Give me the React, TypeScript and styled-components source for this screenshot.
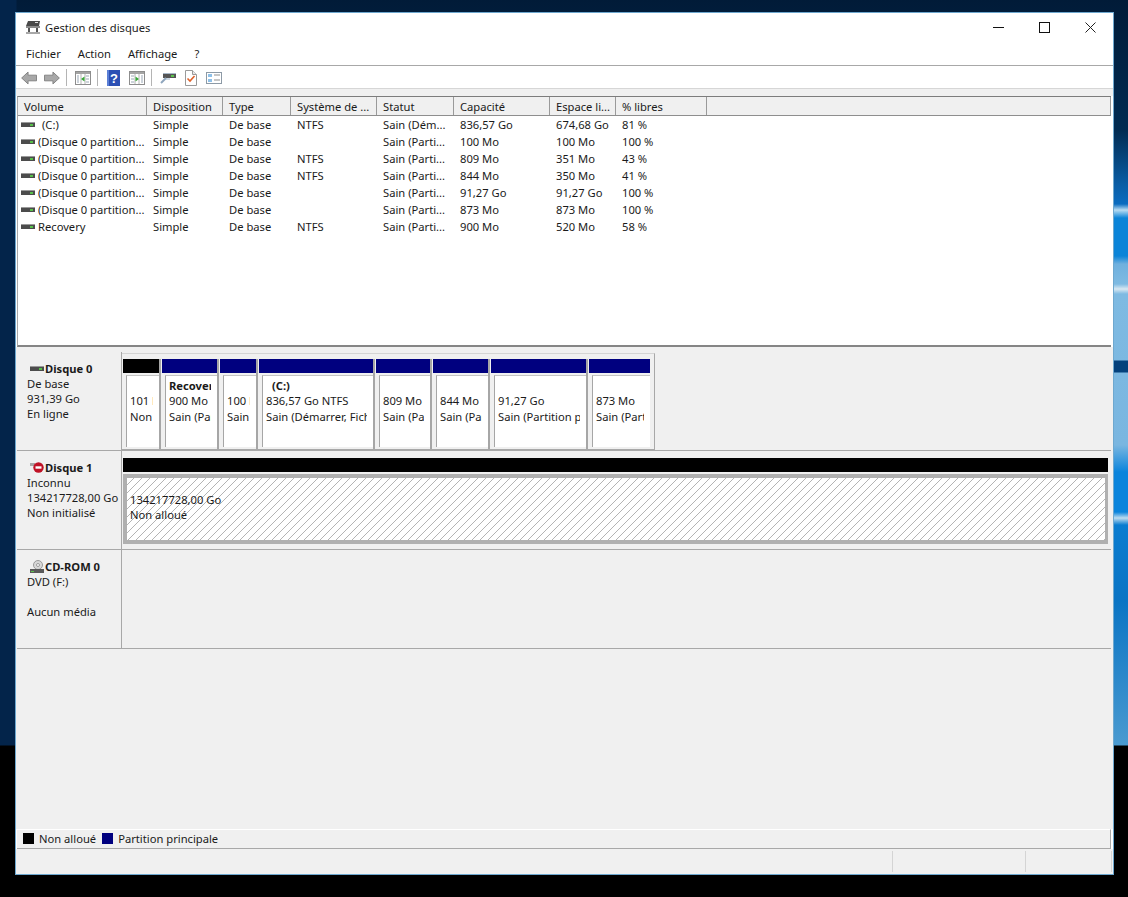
import React from 'react';
import styled, { createGlobalStyle } from 'styled-components';

const GlobalStyle = createGlobalStyle`
  html, body {
    margin: 0;
    padding: 0;
    background: #000;
  }
`;

const Desktop = styled.div`
  width: 1128px;
  height: 897px;
  box-sizing: border-box;
  padding: 12px 14px 22px 15px;
  overflow: hidden;
  font-family: 'Noto Sans', 'Liberation Sans', sans-serif;
  font-size: 11.2px;
  color: #1a1a1a;
  background:
    linear-gradient(to bottom, transparent 0, transparent 745px, #000 746px, #000 100%),
    linear-gradient(to right, #03244a 0, #03244a 16px, transparent 17px),
    linear-gradient(to bottom, transparent 0, transparent 360px, #04417c 361px, #04417c 372px, transparent 373px),
    linear-gradient(to bottom, #011b38 0, #012b52 130px, #0a5ea6 185px, #0b6cc0 204px, #b8dcf2 210px, #0b84d8 218px, #0b84d8 256px, #6fb0de 264px, #7ebae2 284px, #d8e8f2 289px, #7ebae2 294px, #7ab6e0 445px, #0a84dc 472px, #0a84dc 512px, #bcdcf0 518px, #0a7cd0 525px, #0a74c4 600px, #4a9ad0 745px);
`;

const Window = styled.div`
  height: 100%;
  box-sizing: border-box;
  display: flex;
  flex-direction: column;
  background: #fff;
  border: 1px solid #6ea8cf;
`;

const TitleBar = styled.div`
  height: 28px;
  display: flex;
  align-items: center;
  padding-left: 9px;
  color: #222;
  flex: none;
`;

const TitleText = styled.span`
  margin-left: 4px;
`;

const WindowButtons = styled.div`
  margin-left: auto;
  display: flex;
`;

const WindowButton = styled.div`
  width: 46px;
  height: 28px;
  display: flex;
  align-items: center;
  justify-content: center;
`;

const MenuBar = styled.div`
  height: 24px;
  display: flex;
  align-items: center;
  gap: 17px;
  padding-left: 10px;
  flex: none;
  border-bottom: 1px solid #a8a8a8;
`;

const Toolbar = styled.div`
  height: 21px;
  padding-top: 1px;
  display: flex;
  align-items: center;
  padding-left: 5px;
  flex: none;
  border-bottom: 1px solid #d6d6d6;
`;

const ToolIcon = styled.div<{ $w: number; $ml: number }>`
  width: ${(p) => p.$w}px;
  margin-left: ${(p) => p.$ml}px;
  height: 18px;
  display: flex;
  align-items: center;
  justify-content: center;
`;

const ToolSep = styled.div<{ $ml: number }>`
  width: 1px;
  height: 17px;
  margin-left: ${(p) => p.$ml}px;
  background: #b4b4b4;
`;

const Strip = styled.div`
  height: 7px;
  flex: none;
  background: #f0f0f0;
`;

const ListPane = styled.div`
  height: 251px;
  margin: 0 2px 0 1px;
  flex: none;
  display: flex;
  flex-direction: column;
  background: #fff;
  border-top: 1px solid #7c7c7c;
  border-left: 1px solid #a8a8a8;
  border-bottom: 2px solid #858585;
  box-sizing: border-box;
`;

const cols = '129px 76px 68px 86px 77px 96px 66px 91px 1fr';

const HeaderRow = styled.div`
  height: 18px;
  display: grid;
  grid-template-columns: ${cols};
  background: #f0f0f0;
  border-bottom: 1px solid #8e8e8e;
  flex: none;
`;

const HeaderCell = styled.div`
  padding: 1px 0 0 6px;
  line-height: 17px;
  border-right: 1px solid #9a9a9a;
  white-space: nowrap;
  overflow: hidden;
`;

const Row = styled.div`
  height: 17px;
  display: grid;
  grid-template-columns: ${cols};
  line-height: 17px;
`;

const Cell = styled.div`
  padding-left: 6px;
  white-space: nowrap;
`;

const VolumeCell = styled.div<{ $indent: number }>`
  padding-left: 3px;
  display: flex;
  align-items: center;
  white-space: nowrap;
  span {
    margin-left: ${(p) => p.$indent}px;
  }
`;

const DiskPane = styled.div`
  flex: 1;
  min-height: 0;
  padding: 5px 2px 0 1px;
  background: #f0f0f0;
`;

const DiskRow = styled.div`
  height: 99px;
  display: flex;
  box-sizing: border-box;
  border-bottom: 1px solid #a8a8a8;
`;

const DiskLabel = styled.div`
  width: 105px;
  flex: none;
  box-sizing: border-box;
  padding: 9px 0 0 10px;
  line-height: 15px;
  border-right: 1px solid #a8a8a8;
  white-space: nowrap;
`;

const DiskName = styled.div`
  height: 15px;
  display: flex;
  align-items: center;
  font-weight: 700;
  gap: 1px;
  padding-left: 3px;
`;

const DiskLine = styled.div<{ $gap?: boolean }>`
  margin-top: ${(p) => (p.$gap ? 15 : 0)}px;
`;

const Layout = styled.div`
  height: 97px;
  display: flex;
  box-sizing: border-box;
  padding: 5px 4px 0 1px;
  border-top: 1px solid #d4d4d4;
  border-right: 1px solid #a8a8a8;
  border-bottom: 1px solid #a8a8a8;
  margin-top: 1px;
`;

const Partition = styled.div<{ $w: number }>`
  width: ${(p) => p.$w}px;
  flex: none;
  box-sizing: border-box;
  border-right: 2px solid #a6a6a6;
  margin-right: 1px;
  display: flex;
  flex-direction: column;
  &:last-child {
    border-right: 0;
    margin-right: 0;
  }
`;

const PartitionBar = styled.div<{ $color: string }>`
  height: 14px;
  flex: none;
  background: ${(p) => p.$color};
`;

const PartitionBody = styled.div`
  margin: 2px 0 0 3px;
  height: 72px;
  background: #fff;
  box-sizing: border-box;
  border-left: 1px solid #a6a6a6;
  border-top: 1px solid #c4c4c4;
  padding: 2px 6px 0 3px;
  line-height: 15.3px;
  overflow: hidden;
`;

const PartitionText = styled.div<{ $bold?: boolean; $indent?: number }>`
  height: 15.3px;
  white-space: nowrap;
  overflow: hidden;
  font-weight: ${(p) => (p.$bold ? 700 : 400)};
  padding-left: ${(p) => p.$indent ?? 0}px;
`;

const WideLayout = styled.div`
  width: 985px;
  margin: 7px 0 0 1px;
  display: flex;
  flex-direction: column;
`;

const HatchedBody = styled.div`
  height: 70px;
  margin-top: 2px;
  box-sizing: border-box;
  border: 4px solid #b0b0b0;
  border-right-width: 3px;
  padding: 14px 0 0 3px;
  line-height: 15px;
  background-color: #fff;
  background-image: repeating-linear-gradient(
    -45deg,
    #b4b4b4 0,
    #b4b4b4 0.9px,
    #fff 0.9px,
    #fff 5.66px
  );
`;

const HatchedText = styled.div`
  height: 15px;
  white-space: nowrap;
`;

const LegendBar = styled.div`
  height: 20px;
  margin: 0 2px 0 1px;
  flex: none;
  box-sizing: border-box;
  display: flex;
  align-items: center;
  padding: 0 0 1px 6px;
  background: #f0f0f0;
  border-top: 1px solid #fff;
  border-bottom: 1px solid #a8a8a8;
  border-right: 1px solid #a8a8a8;
`;

const Swatch = styled.span<{ $color: string }>`
  width: 11px;
  height: 11px;
  background: ${(p) => p.$color};
  margin-right: 5px;
`;

const LegendText = styled.span`
  margin-right: 6px;
`;

const StatusBar = styled.div`
  height: 25px;
  flex: none;
  display: grid;
  grid-template-columns: 877px 133px 86px;
  background: #f0f0f0;
  padding: 2px 0 0 0;
  box-sizing: border-box;
`;

const StatusCell = styled.div`
  border-right: 1px solid #d4d4d4;
  margin-bottom: 2px;
`;

const DriveIcon = () => (
  <svg width="14" height="8" viewBox="0 0 14 8">
    <rect x="0" y="1" width="14" height="5" fill="#4c4c4c" />
    <rect x="0" y="1" width="14" height="1" fill="#9a9a9a" />
    <rect x="9" y="3" width="3" height="2" fill="#57c04a" />
  </svg>
);

const DiskAppIcon = () => (
  <svg width="16" height="16" viewBox="0 0 16 16">
    <path d="M3 2h12l-1 5H1z" fill="#4a4a4a" />
    <rect x="10" y="3" width="3" height="1" fill="#dcdcdc" />
    <rect x="1" y="7" width="14" height="2" fill="#8a8a8a" />
    <rect x="3" y="9" width="2" height="5" fill="#555" />
    <rect x="11" y="9" width="2" height="5" fill="#555" />
    <rect x="1" y="13" width="14" height="2" fill="#a8a8a8" />
  </svg>
);

const ArrowIcon = ({ flip }: { flip?: boolean }) => (
  <svg width="17" height="14" viewBox="0 0 17 14" style={flip ? { transform: 'scaleX(-1)' } : undefined}>
    <path d="M.7 7 7.5.7v3.3h9v6h-9v3.3z" fill="#a8a8a8" stroke="#808080" strokeWidth="1" />
  </svg>
);

const PanelIcon = ({ mark, right }: { mark: string; right?: boolean }) => (
  <svg width="16" height="14" viewBox="0 0 16 14">
    <rect x="0.5" y="0.5" width="15" height="13" fill="#fff" stroke="#8d8d8d" />
    <rect x="1" y="1" width="14" height="2" fill="#a4a4a4" />
    <path d="M6 3v10M10 3v10" stroke="#b4b4b4" />
    {right ? (
      <path d="M6.5 5.5 10 8l-3.5 2.5z" fill={mark} />
    ) : (
      <path d="M9.5 5.5 6 8l3.5 2.5z" fill={mark} />
    )}
    <path
      d={right ? 'M12 5h2M12 7h2M12 9h2M12 11h2M2 5h3M2 8h3M2 11h3' : 'M2 5h2M2 7h2M2 9h2M2 11h2M11 5h3M11 8h3M11 11h3'}
      stroke="#9aa7b5"
    />
  </svg>
);

const HelpIcon = () => (
  <svg width="13" height="16" viewBox="0 0 13 16">
    <rect x="0" y="0" width="13" height="16" fill="#2c50b4" />
    <rect x="0" y="0" width="2" height="16" fill="#5b7fd6" />
    <text x="7" y="12.5" fontFamily="'Liberation Sans', sans-serif" fontSize="13" fontWeight="700" fill="#fff" textAnchor="middle">
      ?
    </text>
  </svg>
);

const SearchDriveIcon = () => (
  <svg width="16" height="16" viewBox="0 0 16 16">
    <rect x="3" y="3" width="13" height="5" fill="#555" />
    <rect x="3" y="3" width="13" height="1" fill="#a8b8c8" />
    <rect x="11" y="5" width="3" height="2" fill="#5cc44e" />
    <path d="M6 8 1 13" stroke="#8fa6bd" strokeWidth="2" />
    <path d="M6 9h4" stroke="#9bb2c8" />
  </svg>
);

const CheckDocIcon = () => (
  <svg width="12" height="16" viewBox="0 0 12 16">
    <path d="M.5.5h7l4 4v11H.5z" fill="#fff" stroke="#9a9a9a" />
    <path d="M7.5.5v4h4" fill="#e8e8e8" stroke="#9a9a9a" />
    <path d="M2.5 8.5 5 11l4.5-5" fill="none" stroke="#e0622a" strokeWidth="1.6" />
  </svg>
);

const PropsIcon = () => (
  <svg width="16" height="12" viewBox="0 0 16 12">
    <rect x="0.5" y="0.5" width="15" height="11" fill="#fff" stroke="#8d9aa6" />
    <rect x="2" y="2" width="4" height="3" fill="#8fc0e8" />
    <rect x="2" y="7" width="4" height="3" fill="#8fc0e8" />
    <path d="M8 3h6M8 8h6" stroke="#8d8d8d" />
  </svg>
);

const ErrorDiskIcon = () => (
  <svg width="14" height="13" viewBox="0 0 14 13">
    <rect x="0" y="2" width="5" height="3" fill="#a6a6a6" />
    <circle cx="8.5" cy="6.5" r="5.2" fill="#c01226" />
    <rect x="5.5" y="5.3" width="6" height="2.4" fill="#fff" />
  </svg>
);

const CdIcon = () => (
  <svg width="14" height="14" viewBox="0 0 14 14">
    <circle cx="8" cy="5" r="4.5" fill="#d8d8d8" stroke="#9a9a9a" />
    <circle cx="8" cy="5" r="1.5" fill="#fff" stroke="#9a9a9a" />
    <rect x="0" y="9" width="14" height="4" fill="#5a5a5a" />
    <rect x="1" y="11" width="3" height="1" fill="#5cc44e" />
  </svg>
);

const headers = ['Volume', 'Disposition', 'Type', 'Système de ...', 'Statut', 'Capacité', 'Espace li...', '% libres', ''];

const volumes = [
  { name: '(C:)', indent: 7, fs: 'NTFS', status: 'Sain (Dém...', cap: '836,57 Go', free: '674,68 Go', pct: '81 %' },
  { name: '(Disque 0 partition...', indent: 3, fs: '', status: 'Sain (Parti...', cap: '100 Mo', free: '100 Mo', pct: '100 %' },
  { name: '(Disque 0 partition...', indent: 3, fs: 'NTFS', status: 'Sain (Parti...', cap: '809 Mo', free: '351 Mo', pct: '43 %' },
  { name: '(Disque 0 partition...', indent: 3, fs: 'NTFS', status: 'Sain (Parti...', cap: '844 Mo', free: '350 Mo', pct: '41 %' },
  { name: '(Disque 0 partition...', indent: 3, fs: '', status: 'Sain (Parti...', cap: '91,27 Go', free: '91,27 Go', pct: '100 %' },
  { name: '(Disque 0 partition...', indent: 3, fs: '', status: 'Sain (Parti...', cap: '873 Mo', free: '873 Mo', pct: '100 %' },
  { name: 'Recovery', indent: 3, fs: 'NTFS', status: 'Sain (Parti...', cap: '900 Mo', free: '520 Mo', pct: '58 %' },
];

const partitions = [
  { w: 38, color: '#000', name: '', size: '101 Mo', status: 'Non alloué' },
  { w: 57, color: '#00007f', name: 'Recovery', size: '900 Mo', status: 'Sain (Partition' },
  { w: 38, color: '#00007f', name: '', size: '100 Mo', status: 'Sain (Partition' },
  { w: 116, color: '#00007f', name: '(C:)', size: '836,57 Go NTFS', status: 'Sain (Démarrer, Fichier' },
  { w: 56, color: '#00007f', name: '', size: '809 Mo', status: 'Sain (Partition' },
  { w: 57, color: '#00007f', name: '', size: '844 Mo', status: 'Sain (Partition' },
  { w: 97, color: '#00007f', name: '', size: '91,27 Go', status: 'Sain (Partition principale' },
  { w: 61, color: '#00007f', name: '', size: '873 Mo', status: 'Sain (Partition' },
];

export default function App() {
  return (
    <Desktop>
      <GlobalStyle />
      <Window>
        <TitleBar>
          <DiskAppIcon />
          <TitleText>Gestion des disques</TitleText>
          <WindowButtons>
            <WindowButton>
              <svg width="11" height="11" viewBox="0 0 11 11">
                <path d="M0 5.5h11" stroke="#111" />
              </svg>
            </WindowButton>
            <WindowButton>
              <svg width="11" height="11" viewBox="0 0 11 11">
                <rect x="0.5" y="0.5" width="10" height="10" fill="none" stroke="#111" />
              </svg>
            </WindowButton>
            <WindowButton>
              <svg width="11" height="11" viewBox="0 0 11 11">
                <path d="M0.5 0.5l10 10M10.5 0.5l-10 10" stroke="#222" />
              </svg>
            </WindowButton>
          </WindowButtons>
        </TitleBar>
        <MenuBar>
          <span>Fichier</span>
          <span>Action</span>
          <span>Affichage</span>
          <span>?</span>
        </MenuBar>
        <Toolbar>
          <ToolIcon $w={16} $ml={0}><ArrowIcon /></ToolIcon>
          <ToolIcon $w={16} $ml={7}><ArrowIcon flip /></ToolIcon>
          <ToolSep $ml={6} />
          <ToolIcon $w={16} $ml={8}><PanelIcon mark="#38a838" /></ToolIcon>
          <ToolSep $ml={6} />
          <ToolIcon $w={13} $ml={9}><HelpIcon /></ToolIcon>
          <ToolIcon $w={16} $ml={9}><PanelIcon mark="#38a838" right /></ToolIcon>
          <ToolSep $ml={6} />
          <ToolIcon $w={16} $ml={8}><SearchDriveIcon /></ToolIcon>
          <ToolIcon $w={12} $ml={9}><CheckDocIcon /></ToolIcon>
          <ToolIcon $w={16} $ml={9}><PropsIcon /></ToolIcon>
        </Toolbar>
        <Strip />
        <ListPane>
          <HeaderRow>
            {headers.map((h, i) => (
              <HeaderCell key={i}>{h}</HeaderCell>
            ))}
          </HeaderRow>
          {volumes.map((v, i) => (
            <Row key={i}>
              <VolumeCell $indent={v.indent}>
                <DriveIcon />
                <span>{v.name}</span>
              </VolumeCell>
              <Cell>Simple</Cell>
              <Cell>De base</Cell>
              <Cell>{v.fs}</Cell>
              <Cell>{v.status}</Cell>
              <Cell>{v.cap}</Cell>
              <Cell>{v.free}</Cell>
              <Cell>{v.pct}</Cell>
            </Row>
          ))}
        </ListPane>
        <DiskPane>
          <DiskRow>
            <DiskLabel>
              <DiskName><DriveIcon /> Disque 0</DiskName>
              <DiskLine>De base</DiskLine>
              <DiskLine>931,39 Go</DiskLine>
              <DiskLine>En ligne</DiskLine>
            </DiskLabel>
            <Layout>
              {partitions.map((p, i) => (
                <Partition key={i} $w={p.w}>
                  <PartitionBar $color={p.color} />
                  <PartitionBody>
                    <PartitionText $bold $indent={p.name === '(C:)' ? 6 : 0}>{p.name}</PartitionText>
                    <PartitionText>{p.size}</PartitionText>
                    <PartitionText>{p.status}</PartitionText>
                  </PartitionBody>
                </Partition>
              ))}
            </Layout>
          </DiskRow>
          <DiskRow>
            <DiskLabel>
              <DiskName><ErrorDiskIcon /> Disque 1</DiskName>
              <DiskLine>Inconnu</DiskLine>
              <DiskLine>134217728,00 Go</DiskLine>
              <DiskLine>Non initialisé</DiskLine>
            </DiskLabel>
            <WideLayout>
              <PartitionBar $color="#000" />
              <HatchedBody>
                <HatchedText>134217728,00 Go</HatchedText>
                <HatchedText>Non alloué</HatchedText>
              </HatchedBody>
            </WideLayout>
          </DiskRow>
          <DiskRow>
            <DiskLabel>
              <DiskName><CdIcon /> CD-ROM 0</DiskName>
              <DiskLine>DVD (F:)</DiskLine>
              <DiskLine $gap>Aucun média</DiskLine>
            </DiskLabel>
          </DiskRow>
        </DiskPane>
        <LegendBar>
          <Swatch $color="#000" />
          <LegendText>Non alloué</LegendText>
          <Swatch $color="#00007f" />
          <LegendText>Partition principale</LegendText>
        </LegendBar>
        <StatusBar>
          <StatusCell />
          <StatusCell />
          <StatusCell />
        </StatusBar>
      </Window>
    </Desktop>
  );
}
